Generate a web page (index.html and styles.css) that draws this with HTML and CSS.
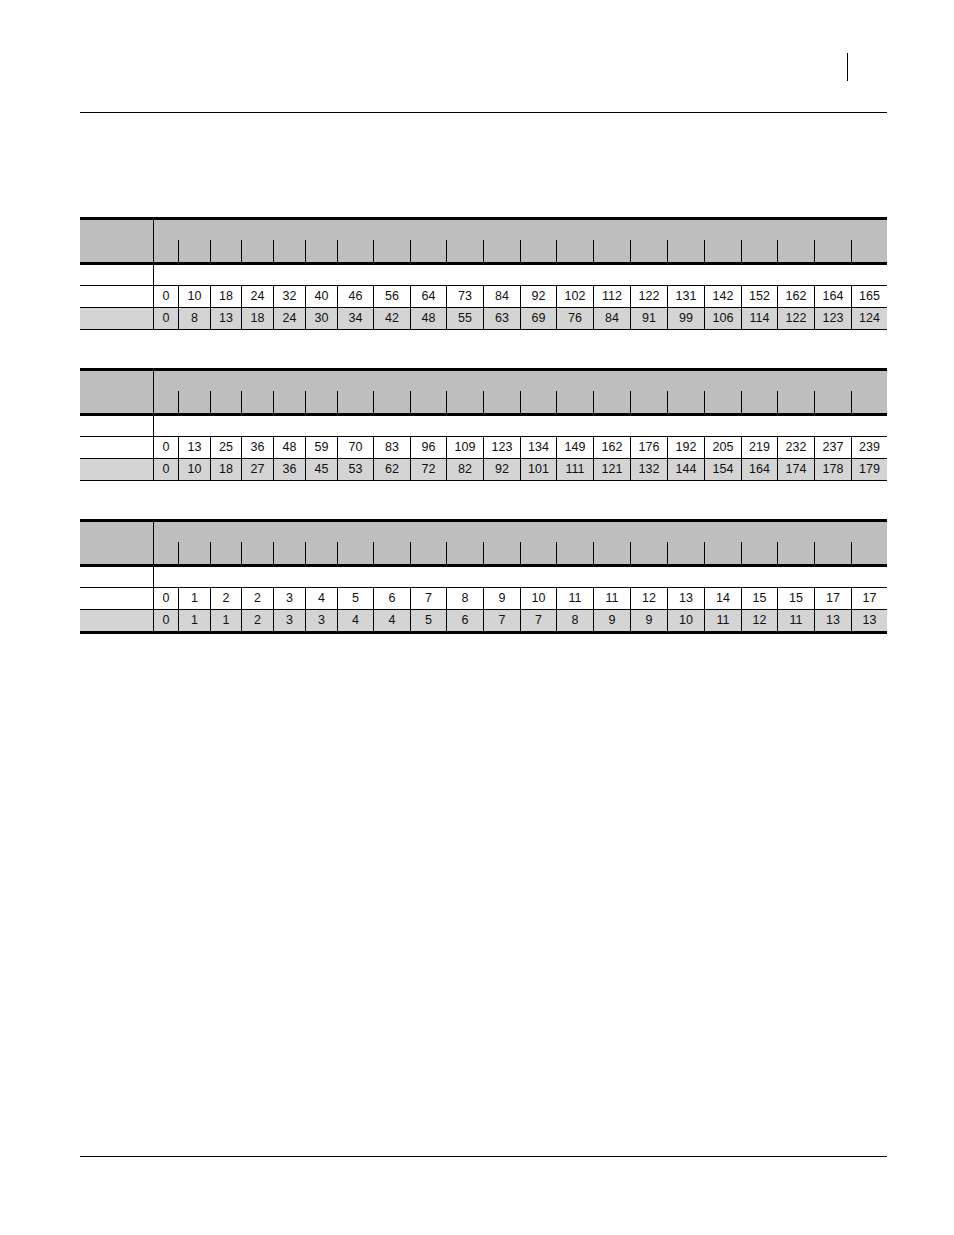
FILE: index.html
```html
<!DOCTYPE html>
<html>
<head>
<meta charset="utf-8">
<link rel="stylesheet" href="styles.css">
</head>
<body>
<div class="page">
  <header class="masthead"><span class="tab-bar"></span></header>
  <main class="tables">
    <table class="rate">
      <colgroup>
        <col class="w73"><col class="w25"><col class="w32"><col class="w31"><col class="w32"><col class="w32"><col class="w32"><col class="w36"><col class="w37"><col class="w36"><col class="w37"><col class="w37"><col class="w36"><col class="w37"><col class="w37"><col class="w37"><col class="w37"><col class="w37"><col class="w36"><col class="w37"><col class="w37"><col class="w36">
      </colgroup>
      <thead>
        <tr class="ha"><th class="lab" rowspan="2"></th><th class="span" colspan="21"></th></tr>
        <tr class="hb"><th class="first"></th><th></th><th></th><th></th><th></th><th></th><th></th><th></th><th></th><th></th><th></th><th></th><th></th><th></th><th></th><th></th><th></th><th></th><th></th><th></th><th></th></tr>
      </thead>
      <tbody>
        <tr class="blank"><td class="lab"></td><td class="span" colspan="21"></td></tr>
        <tr class="r1"><td class="lab"></td><td>0</td><td>10</td><td>18</td><td>24</td><td>32</td><td>40</td><td>46</td><td>56</td><td>64</td><td>73</td><td>84</td><td>92</td><td>102</td><td>112</td><td>122</td><td>131</td><td>142</td><td>152</td><td>162</td><td>164</td><td>165</td></tr>
        <tr class="r2"><td class="lab"></td><td>0</td><td>8</td><td>13</td><td>18</td><td>24</td><td>30</td><td>34</td><td>42</td><td>48</td><td>55</td><td>63</td><td>69</td><td>76</td><td>84</td><td>91</td><td>99</td><td>106</td><td>114</td><td>122</td><td>123</td><td>124</td></tr>
      </tbody>
    </table>

    <table class="rate">
      <colgroup>
        <col class="w73"><col class="w25"><col class="w32"><col class="w31"><col class="w32"><col class="w32"><col class="w32"><col class="w36"><col class="w37"><col class="w36"><col class="w37"><col class="w37"><col class="w36"><col class="w37"><col class="w37"><col class="w37"><col class="w37"><col class="w37"><col class="w36"><col class="w37"><col class="w37"><col class="w36">
      </colgroup>
      <thead>
        <tr class="ha"><th class="lab" rowspan="2"></th><th class="span" colspan="21"></th></tr>
        <tr class="hb"><th class="first"></th><th></th><th></th><th></th><th></th><th></th><th></th><th></th><th></th><th></th><th></th><th></th><th></th><th></th><th></th><th></th><th></th><th></th><th></th><th></th><th></th></tr>
      </thead>
      <tbody>
        <tr class="blank"><td class="lab"></td><td class="span" colspan="21"></td></tr>
        <tr class="r1"><td class="lab"></td><td>0</td><td>13</td><td>25</td><td>36</td><td>48</td><td>59</td><td>70</td><td>83</td><td>96</td><td>109</td><td>123</td><td>134</td><td>149</td><td>162</td><td>176</td><td>192</td><td>205</td><td>219</td><td>232</td><td>237</td><td>239</td></tr>
        <tr class="r2"><td class="lab"></td><td>0</td><td>10</td><td>18</td><td>27</td><td>36</td><td>45</td><td>53</td><td>62</td><td>72</td><td>82</td><td>92</td><td>101</td><td>111</td><td>121</td><td>132</td><td>144</td><td>154</td><td>164</td><td>174</td><td>178</td><td>179</td></tr>
      </tbody>
    </table>

    <table class="rate last">
      <colgroup>
        <col class="w73"><col class="w25"><col class="w32"><col class="w31"><col class="w32"><col class="w32"><col class="w32"><col class="w36"><col class="w37"><col class="w36"><col class="w37"><col class="w37"><col class="w36"><col class="w37"><col class="w37"><col class="w37"><col class="w37"><col class="w37"><col class="w36"><col class="w37"><col class="w37"><col class="w36">
      </colgroup>
      <thead>
        <tr class="ha"><th class="lab" rowspan="2"></th><th class="span" colspan="21"></th></tr>
        <tr class="hb"><th class="first"></th><th></th><th></th><th></th><th></th><th></th><th></th><th></th><th></th><th></th><th></th><th></th><th></th><th></th><th></th><th></th><th></th><th></th><th></th><th></th><th></th></tr>
      </thead>
      <tbody>
        <tr class="blank"><td class="lab"></td><td class="span" colspan="21"></td></tr>
        <tr class="r1"><td class="lab"></td><td>0</td><td>1</td><td>2</td><td>2</td><td>3</td><td>4</td><td>5</td><td>6</td><td>7</td><td>8</td><td>9</td><td>10</td><td>11</td><td>11</td><td>12</td><td>13</td><td>14</td><td>15</td><td>15</td><td>17</td><td>17</td></tr>
        <tr class="r2"><td class="lab"></td><td>0</td><td>1</td><td>1</td><td>2</td><td>3</td><td>3</td><td>4</td><td>4</td><td>5</td><td>6</td><td>7</td><td>7</td><td>8</td><td>9</td><td>9</td><td>10</td><td>11</td><td>12</td><td>11</td><td>13</td><td>13</td></tr>
      </tbody>
    </table>
  </main>
  <footer class="foot"></footer>
</div>
</body>
</html>
```

FILE: styles.css
```css
html, body {
  margin: 0;
  padding: 0;
  background: #fff;
}

.page {
  width: 954px;
  min-height: 1235px;
  box-sizing: border-box;
  padding: 0 67px 78px 80px;
  display: flex;
  flex-direction: column;
  font-family: "Liberation Sans", Arial, sans-serif;
  color: #111;
}

.masthead {
  height: 113px;
  box-sizing: border-box;
  border-bottom: 1px solid #000;
  display: flex;
  align-items: flex-start;
  padding-top: 53px;
}

.tab-bar {
  display: block;
  width: 1px;
  height: 28px;
  margin-left: 767px;
  background: #000;
}

.tables {
  display: flex;
  flex-direction: column;
  gap: 38px;
  margin-top: 104px;
}

.rate {
  width: 807px;
  table-layout: fixed;
  border-collapse: separate;
  border-spacing: 0;
  border-top: 3px solid #000;
  font-size: 12.5px;
}

.w73 { width: 73px; }
.w25 { width: 25px; }
.w31 { width: 31px; }
.w32 { width: 32px; }
.w36 { width: 36px; }
.w37 { width: 37px; }

.rate th,
.rate td {
  box-sizing: border-box;
  padding: 0;
  text-align: center;
  vertical-align: middle;
  font-weight: normal;
  line-height: 14px;
  border-left: 1px solid #000;
}

.rate .lab {
  border-left: none;
}

.rate thead th {
  background: #bebebe;
}

.rate .ha th {
  height: 20px;
}

.rate .hb th {
  height: 25px;
  border-bottom: 3px solid #000;
}

.rate .ha th.lab {
  border-bottom: 3px solid #000;
}

.rate .blank td {
  height: 21px;
  border-bottom: 1px solid #000;
}

.rate .r1 td {
  height: 22px;
  padding-bottom: 2px;
  border-bottom: 1px solid #000;
  background: #fff;
}

.rate .r2 td {
  height: 22px;
  padding-bottom: 2px;
  border-bottom: 1px solid #000;
  background: #d4d4d4;
}

.rate.last .r2 td {
  height: 24px;
  border-bottom: 3px solid #000;
}

.foot {
  margin-top: auto;
  border-top: 1px solid #000;
}
```
